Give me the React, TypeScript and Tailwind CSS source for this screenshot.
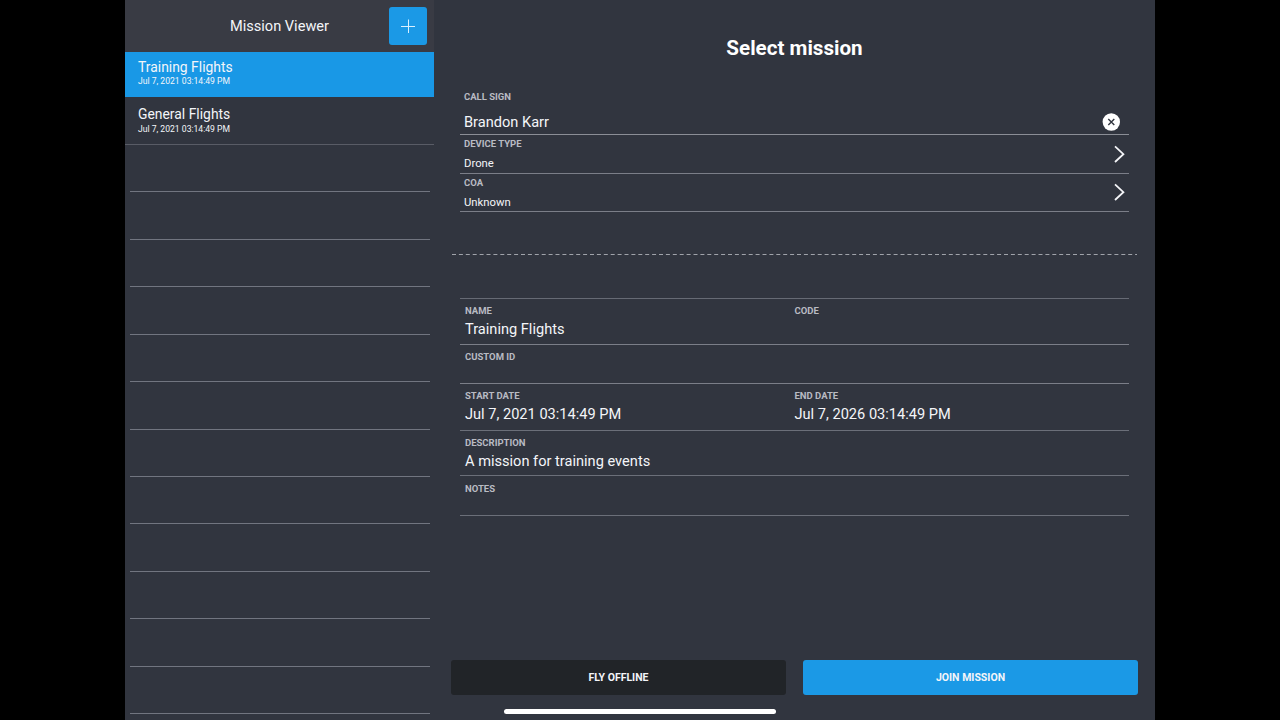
import type { ReactNode } from "react";

const missions = [
  { name: "Training Flights", date: "Jul 7, 2021 03:14:49 PM" },
  { name: "General Flights", date: "Jul 7, 2021 03:14:49 PM" },
];

const emptyRows = Array.from({ length: 12 }, (_, i) => i);

function Label({ children }: { children: ReactNode }) {
  return <div className="h-3 text-[9.5px] leading-3 font-bold text-[#b9bbc3]">{children}</div>;
}

function Value({ children }: { children?: ReactNode }) {
  return <div className="mt-[2px] h-5 text-[14.6px] leading-5">{children}</div>;
}

function Chevron() {
  return (
    <svg width="12" height="18" viewBox="0 0 12 18" fill="none" stroke="#f4f5f8" strokeWidth="1.8">
      <path d="M2 1.4L10.4 9.2L2 17" />
    </svg>
  );
}

function Sidebar() {
  return (
    <aside className="flex w-[309px] shrink-0 flex-col overflow-hidden">
      <header className="grid h-[52px] shrink-0 grid-cols-[1fr_auto_1fr] items-center bg-[#393b44]">
        <span />
        <h1 className="pt-[2px] text-[14.6px]">Mission Viewer</h1>
        <button className="mr-[7px] flex h-[38px] w-[38px] items-center justify-center justify-self-end rounded-[3px] bg-[#1b99e6]">
          <svg width="14" height="14" viewBox="0 0 14 14" stroke="#d8f0ff" strokeWidth="1">
            <path d="M0 7.5H14M7.5 0.5V14" />
          </svg>
        </button>
      </header>

      <div className="h-[45px] shrink-0 bg-[#1998e6] pt-[5px] pl-[13px]">
        <div className="text-[13.9px] leading-5">{missions[0].name}</div>
        <div className="text-[8.6px] leading-[9px]">{missions[0].date}</div>
      </div>
      <div className="h-[47.9px] shrink-0 border-b border-[#595c66] pt-[7px] pl-[13px]">
        <div className="text-[13.9px] leading-5">{missions[1].name}</div>
        <div className="mt-px text-[8.6px] leading-[9px]">{missions[1].date}</div>
      </div>

      {emptyRows.map((row) => (
        <div key={row} className="mr-1 ml-[5px] h-[47.45px] shrink-0 border-b border-[#717580]" />
      ))}
    </aside>
  );
}

function PickerRow({ label, value }: { label: string; value: string }) {
  return (
    <div className="flex h-[38.5px] items-center justify-between border-b border-[#7b7e88] pr-1 pl-1">
      <div className="pt-[3px]">
        <Label>{label}</Label>
        <div className="mt-[6px] h-4 text-[11.3px] leading-4">{value}</div>
      </div>
      <Chevron />
    </div>
  );
}

export default function App() {
  return (
    <div className="flex h-[720px] w-[1280px] justify-center overflow-hidden bg-black font-[Roboto,sans-serif] text-[#f4f5f9]">
      <div className="flex h-full w-[1030px] bg-[#31353f]">
        <Sidebar />

        <main className="flex flex-1 flex-col">
          <h2 className="mt-[34px] h-7 text-center text-[20.6px] leading-7 font-bold text-white">Select mission</h2>

          <section className="mt-[29px] mr-[26px] ml-[26px]">
            <div className="flex h-[44px] items-end justify-between border-b border-[#8b8e96] pr-[9px] pb-[2px] pl-1">
              <div>
                <Label>CALL SIGN</Label>
                <div className="mt-[9px] h-5 text-[14.6px] leading-5">Brandon Karr</div>
              </div>
              <svg className="mb-px" width="18" height="18" viewBox="0 0 18 18">
                <circle cx="9.3" cy="9" r="8.7" fill="white" />
                <path d="M6.3 6L12.3 12M12.3 6L6.3 12" stroke="#31353f" strokeWidth="1.4" />
              </svg>
            </div>
            <PickerRow label="DEVICE TYPE" value="Drone" />
            <PickerRow label="COA" value="Unknown" />
          </section>

          <svg className="mt-[42px] ml-[18px] h-px w-[685px]" viewBox="0 0 685 1">
            <path d="M0 0.5H685" stroke="#a0a3aa" strokeDasharray="4 2.9" />
          </svg>

          <section className="mt-[43px] mr-[26px] ml-[26px] border-t border-[#666a74]">
            <div className="grid h-[46px] grid-cols-[329.5px_1fr] border-b border-[#7b7e88] pt-[6px] pl-[5px]">
              <div>
                <Label>NAME</Label>
                <Value>Training Flights</Value>
              </div>
              <div>
                <Label>CODE</Label>
              </div>
            </div>
            <div className="h-[39px] border-b border-[#7b7e88] pt-[6px] pl-[5px]">
              <Label>CUSTOM ID</Label>
            </div>
            <div className="grid h-[46.5px] grid-cols-[329.5px_1fr] border-b border-[#6b6f79] pt-[6px] pl-[5px]">
              <div>
                <Label>START DATE</Label>
                <Value>Jul 7, 2021 03:14:49 PM</Value>
              </div>
              <div>
                <Label>END DATE</Label>
                <Value>Jul 7, 2026 03:14:49 PM</Value>
              </div>
            </div>
            <div className="h-[45.5px] border-b border-[#6b6f79] pt-[6px] pl-[5px]">
              <Label>DESCRIPTION</Label>
              <Value>A mission for training events</Value>
            </div>
            <div className="h-[40px] border-b border-[#6b6f79] pt-[7px] pl-[5px]">
              <Label>NOTES</Label>
            </div>
          </section>

          <div className="mt-auto mr-[17px] mb-[25px] ml-[17px] flex gap-[17px] text-[10.5px] font-bold">
            <button className="h-[35px] flex-1 rounded-[3px] bg-[#212428]">FLY OFFLINE</button>
            <button className="h-[35px] flex-1 rounded-[3px] bg-[#1b99e6]">JOIN MISSION</button>
          </div>
        </main>
      </div>

      {/* home indicator */}
      <div className="absolute top-[709px] left-[504px] h-[5px] w-[272px] rounded-full bg-white" />
    </div>
  );
}
